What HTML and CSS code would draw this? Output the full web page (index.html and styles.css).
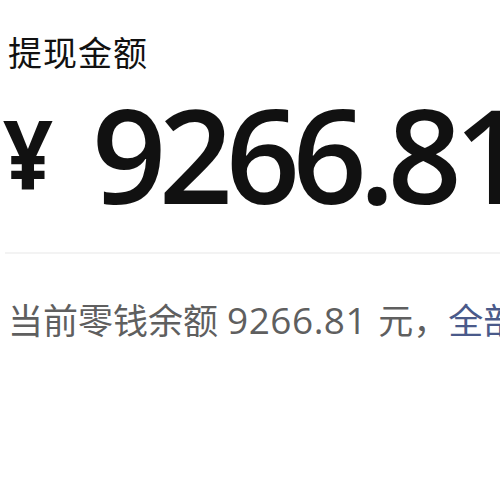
FILE: index.html
```html
<!DOCTYPE html>
<html lang="zh-CN">
<head>
<meta charset="utf-8">
<link rel="stylesheet" href="styles.css">
</head>
<body>
<div class="page">
  <div class="title">提现金额</div>
  <div class="amount-row">
    <span class="yen">¥</span>
    <span class="amount">9266.81</span>
  </div>
  <div class="divider"></div>
  <div class="balance">当前零钱余额<span class="num">9266.81</span>元，<span class="link">全部提现</span></div>
</div>
</body>
</html>
```
FILE: styles.css
```css
html, body {
  margin: 0;
  padding: 0;
  background: #ffffff;
  overflow: hidden;
}
.page {
  width: 500px;
  height: 500px;
  overflow: hidden;
  font-family: "Noto Sans CJK SC", "Noto Sans", sans-serif;
}
.title {
  margin: 0;
  padding: 27px 0 0 8px;
  font-size: 34px;
  line-height: 50px;
  color: #111111;
  letter-spacing: 1px;
}
.amount-row {
  display: flex;
  align-items: flex-start;
  padding-left: 8px;
  margin-top: 15px;
  height: 130px;
  white-space: nowrap;
}
.yen {
  font-family: "Open Sans", sans-serif;
  font-weight: 700;
  font-size: 95px;
  line-height: 95px;
  margin-top: 13px;
  margin-left: -5px;
  color: #111111;
  width: 89px;
  flex: none;
  transform: scaleX(0.92);
  transform-origin: left;
}
.amount {
  font-family: "Open Sans", sans-serif;
  font-weight: 600;
  font-size: 130px;
  letter-spacing: -7.5px;
  color: #111111;
  line-height: 130px;
  margin-top: -3px;
}
.divider {
  margin: 30px 0 0 5px;
  height: 2px;
  background: #f3f3f3;
}
.balance {
  margin-top: 42px;
  padding-left: 8px;
  font-size: 35px;
  line-height: 46px;
  color: #5f5f5f;
  white-space: nowrap;
}
.num {
  font-family: "Open Sans", "Noto Sans", sans-serif;
  font-size: 37px;
  letter-spacing: 0.5px;
  margin: 0 11px 0 9px;
}
.link {
  color: #4a5a8a;
}
```
